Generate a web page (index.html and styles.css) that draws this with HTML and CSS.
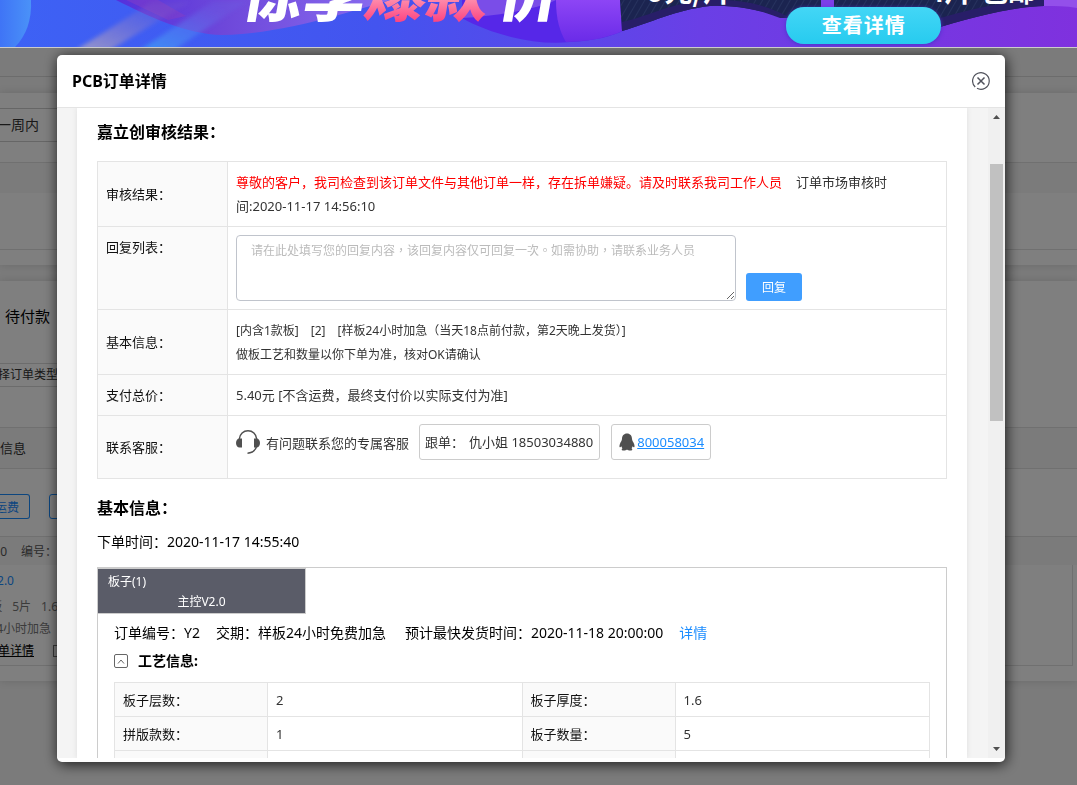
FILE: index.html
```html
<!DOCTYPE html>
<html lang="zh-CN">
<head>
<meta charset="utf-8">
<title>PCB订单详情</title>
<link rel="stylesheet" href="styles.css">
</head>
<body>
<header class="banner">
  <svg class="banner-art" viewBox="0 0 1077 47" preserveAspectRatio="xMidYMin slice" aria-hidden="true">
    <defs>
      <linearGradient id="base" x1="0" x2="1" y1="0" y2="0"><stop offset="0" stop-color="#3d62f5"/><stop offset=".35" stop-color="#4354ef"/><stop offset=".65" stop-color="#6a3fe6"/><stop offset="1" stop-color="#7f31de"/></linearGradient>
      <linearGradient id="orb" x1="0" x2="1" y1="0" y2="0"><stop offset="0" stop-color="#5430dc"/><stop offset=".4" stop-color="#6e48da"/><stop offset="1" stop-color="#8a6df0"/></linearGradient>
      <linearGradient id="ball" x1="0" x2="0" y1="0" y2="1"><stop offset="0" stop-color="#8d45f5"/><stop offset="1" stop-color="#6a2be8"/></linearGradient>
      <linearGradient id="edge" x1="0" x2="1" y1="0" y2="0"><stop offset="0" stop-color="#3f74f6"/><stop offset="1" stop-color="#4a92f8"/></linearGradient>
      <linearGradient id="hot" x1="0" x2="0" y1="0" y2="1"><stop offset=".6" stop-color="#ff8fae"/><stop offset=".9" stop-color="#fb3a7b"/></linearGradient>
      <linearGradient id="warm" x1="1" x2="0" y1="0" y2="1"><stop offset=".2" stop-color="#8a6fc4" stop-opacity=".2"/><stop offset="1" stop-color="#b1a8c0"/></linearGradient>
      <linearGradient id="cool" x1="1" x2="0" y1="0" y2="1"><stop offset=".2" stop-color="#6a7cf0" stop-opacity=".2"/><stop offset="1" stop-color="#3c9cf4"/></linearGradient>
      <pattern id="hatch" width="6" height="8" patternUnits="userSpaceOnUse" patternTransform="rotate(30)"><path d="M0 0V8" stroke="#31406c" stroke-width="1"/></pattern>
      <filter id="soft" x="-20%" y="-20%" width="140%" height="140%"><feGaussianBlur stdDeviation="2"/></filter>
    </defs>
    <rect width="1077" height="47" fill="url(#base)"/>
    <path d="M0 0H31C32 20 26 36 15 47H0Z" fill="url(#edge)"/>
    <path d="M116 0C150 17 185 34 222 35C275 34 330 18 390 0Z" fill="url(#orb)"/>
    <path d="M126 0H158L186 16L168 20Z" fill="#8a3fc4" opacity=".45"/>
    <path d="M76 50L152 2H190L110 50Z" fill="url(#warm)" opacity=".8" filter="url(#soft)"/>
    <path d="M140 50L212 2H246L174 50Z" fill="url(#cool)" opacity=".8" filter="url(#soft)"/>
    <path d="M462 18C490 34 535 46 570 42C595 41 612 36 625 30V0H462Z" fill="#5627e8"/>
    <path d="M470 0H556C540 8 500 16 462 18Z" fill="#7a4de8"/>
    <path d="M556 0C556 20 560 32 566 42C592 41 610 37 622 31L620 0Z" fill="url(#ball)"/>
    <path d="M620 0H821V18L780 17C755 8 730 5 710 6C675 10 650 23 622 31Z" fill="#1b2450"/>
    <path d="M620 0H821V18L780 17C755 8 730 5 710 6C675 10 650 23 622 31Z" fill="url(#hatch)"/>
    <path d="M622 31V22C650 16 672 2 710 0C745 -1 770 6 790 18H780C755 8 730 5 710 6C675 10 650 23 622 31Z" fill="#281e68"/>
    <path d="M834 0H1044V6C1010 7 970 18 930 30H834Z" fill="#1b2450"/>
    <path d="M834 0H1044V6C1010 7 970 18 930 30H834Z" fill="url(#hatch)"/>
    <path d="M930 30V21C975 8 1010 0 1044 0V6C1010 7 970 18 930 30Z" fill="#281e68"/>
    <path d="M821 0H834V12H821Z" fill="#7c3ee8"/>
    <path d="M1044 0H1077V8C1066 6 1054 6 1044 6Z" fill="#9350ea"/>
    <g class="slogan">
      <text transform="translate(239 16) skewX(-10)" fill="#fff">惊享</text>
      <text transform="translate(362 16) skewX(-10)" fill="url(#hot)">爆款</text>
      <text transform="translate(496 16) skewX(-10)" fill="#fff">价</text>
    </g>
    <g class="offer" fill="#fff">
      <text x="648" y="2">9元/片</text>
      <text x="928" y="2">4片</text>
      <text x="980" y="2">包邮</text>
    </g>
  </svg>
  <a class="banner-btn" href="#">查看详情</a>
</header>

<main class="page">
  <nav class="page-nav"></nav>
  <section class="panel filters">
    <div class="filter-box">近一周内</div>
    <div class="band band-short"></div>
    <div class="filter-body"></div>
  </section>
  <section class="panel orders">
    <div class="order-tab">待付款</div>
    <div class="type-select">选择订单类型</div>
    <div class="band band-title">信息</div>
    <div class="ship-row"><button class="ghost ghost-first" type="button">运费</button><button class="ghost" type="button">合并</button></div>
    <div class="band band-order"><span class="clip-num">00</span><span>编号：</span></div>
    <div class="order-row">
      <div class="order-info">
        <a class="order-name" href="#">V2.0</a>
        <p class="order-spec"><span>板</span><span>5片</span><span>1.6</span></p>
        <p class="order-speed">24小时加急</p>
        <p class="order-links"><a href="#">订单详情</a><span class="mini-box"></span></p>
      </div>
    </div>
  </section>
</main>

<div class="mask">
  <section class="dialog" role="dialog" aria-labelledby="dialog-title">
    <header class="dialog-head">
      <h1 id="dialog-title">PCB订单详情</h1>
      <button class="close" type="button" aria-label="关闭">
        <svg viewBox="0 0 18 18" width="18" height="18" fill="none" stroke="#50525c"><path d="M3.200 15A8.300 8.300 0 1 1 5 16.300" stroke-width="1.200"/><path d="M5.500 5.500L12.500 12.500M12.500 5.500L5.500 12.500" stroke-width="1.500"/></svg>
      </button>
    </header>
    <div class="dialog-body">
      <div class="card">
        <h2>嘉立创审核结果：</h2>
        <table class="grid review">
          <tr class="tall"><th scope="row">审核结果：</th><td><p class="result"><span class="alert">尊敬的客户，我司检查到该订单文件与其他订单一样，存在拆单嫌疑。请及时联系我司工作人员</span>订单市场审核时间:2020-11-17 14:56:10</p></td></tr>
          <tr class="reply"><th scope="row"><label for="reply">回复列表：</label></th><td><div class="reply-line"><textarea id="reply" lang="zh-TW" placeholder="请在此处填写您的回复内容，该回复内容仅可回复一次。如需协助，请联系业务人员"></textarea><button class="primary" type="button">回复</button></div></td></tr>
          <tr class="tall"><th scope="row">基本信息：</th><td class="small"><p class="tags"><span>[内含1款板]</span><span>[2]</span><span>[样板24小时加急（当天18点前付款，第2天晚上发货）]</span></p><p>做板工艺和数量以你下单为准，核对OK请确认</p></td></tr>
          <tr class="price"><th scope="row">支付总价：</th><td>5.40元 [不含运费，最终支付价以实际支付为准]</td></tr>
          <tr class="contact"><th scope="row">联系客服：</th><td><div class="contact-line">
            <svg class="headset" viewBox="0 0 24 24" width="24" height="24" aria-hidden="true"><path d="M3.300 9C3.800 4 7.400 .8 12 .8S20.200 4 20.700 9" fill="none" stroke="#505050" stroke-width="1.500"/><path d="M20.700 16C19.500 20.500 16 23 11.500 23.200" fill="none" stroke="#505050" stroke-width="1.500"/><path d="M6 8.500V17.500H3.500C1.500 17.500 0 15.500 0 13S1.500 8.500 3.500 8.500ZM18 8.500V17.500H20.500C22.500 17.500 24 15.500 24 13S22.500 8.500 20.500 8.500Z" fill="#505050"/></svg>
            <span class="contact-text">有问题联系您的专属客服</span>
            <span class="chip"><span>跟单：</span><span>仇小姐 18503034880</span></span>
            <span class="chip chip-qq"><svg viewBox="0 0 16 18" width="16" height="18" aria-hidden="true"><path d="M8 .5C4.800 .5 3 2.800 3 5.800C3 7.500 1.800 8.800 1 10.800C.3 12.500 .3 14.300 .9 14.300C1.400 14.300 2 13.500 2.300 13.200C2.500 14 2.900 14.700 3.500 15.200C2.500 15.600 2.200 17.300 4 17.500C5.500 17.700 7.200 17.300 8 16.500C8.800 17.300 10.500 17.700 12 17.500C13.800 17.300 13.500 15.600 12.500 15.200C13.100 14.700 13.500 14 13.700 13.200C14 13.500 14.600 14.300 15.100 14.300C15.700 14.300 15.700 12.500 15 10.800C14.200 8.800 13 7.500 13 5.800C13 2.800 11.200 .5 8 .5Z" fill="#505050"/></svg><a href="#">800058034</a></span>
          </div></td></tr>
        </table>

        <h2 class="second">基本信息：</h2>
        <p class="ordered">下单时间：2020-11-17 14:55:40</p>

        <div class="board">
          <button class="board-tab" type="button"><span class="board-no">板子(1)</span><span class="board-name">主控V2.0</span></button>
          <p class="board-meta"><span>订单编号：Y2</span><span>交期：样板24小时免费加急</span><span class="eta">预计最快发货时间：2020-11-18 20:00:00</span><a href="#">详情</a></p>
          <div class="craft-head">
            <button class="toggle" type="button" aria-label="收起"><svg viewBox="0 0 8 5" width="8" height="5" fill="none" stroke="#666"><path d="M1 4.500L4 1L7 4.500"/></svg></button>
            <h3>工艺信息:</h3>
          </div>
          <table class="grid craft">
            <tr><th scope="row">板子层数：</th><td>2</td><th scope="row">板子厚度：</th><td>1.6</td></tr>
            <tr><th scope="row">拼版款数：</th><td>1</td><th scope="row">板子数量：</th><td>5</td></tr>
            <tr><th></th><td></td><th></th><td></td></tr>
          </table>
        </div>
      </div>
      <div class="scrollbar" aria-hidden="true">
        <svg viewBox="0 0 7 4" width="7" height="4"><path d="M0 4L3.500 0L7 4Z" fill="#505050"/></svg>
        <span class="track"><span class="thumb"></span></span>
        <svg viewBox="0 0 7 4" width="7" height="4"><path d="M0 0L3.500 4L7 0Z" fill="#505050"/></svg>
      </div>
    </div>
  </section>
</div>
</body>
</html>
```

FILE: styles.css
```css
* { box-sizing: border-box; }
body {
  margin: 0;
  height: 100vh;
  overflow: hidden;
  display: flex;
  flex-direction: column;
  background: #f6f6f6;
  color: #000;
  font-family: "Noto Sans", "Noto Sans CJK SC", sans-serif;
  font-size: 13px;
  line-height: 24px;
}
p, h1, h2, h3 { margin: 0; }
button { font-family: inherit; padding: 0; cursor: pointer; }
a { color: #1a8cff; text-decoration: none; }

/* banner */
.banner {
  position: relative;
  z-index: 2;
  flex: none;
  height: 48px;
  overflow: hidden;
  border-bottom: 1px solid #ccc;
}
.banner-art { display: block; width: 100%; height: 47px; }
.slogan { font-family: "Noto Sans CJK SC", sans-serif; font-size: 62px; font-weight: 900; }
.offer { font-family: "Noto Sans CJK SC", sans-serif; font-size: 28px; font-weight: 700; }
.banner-btn {
  position: absolute;
  left: 73%;
  top: 7px;
  width: 155px;
  height: 37px;
  border-radius: 18px;
  background: linear-gradient(#43d6f6, #27cbef);
  box-shadow: 0 1px 4px #4a35c8;
  color: #fff;
  font-size: 20px;
  font-weight: 700;
  letter-spacing: 1px;
  line-height: 38px;
  text-align: center;
}

/* page underneath */
.page { flex: 1; min-height: 0; overflow: hidden; color: #333; }
.page-nav { height: 29px; border-bottom: 1px solid #d8d8d8; }
.panel { margin-top: 16px; background: #fff; box-shadow: 0 0 8px #d4d4d4; }
.filters { height: 172px; padding-top: 15px; }
.filter-box {
  display: flex;
  justify-content: flex-end;
  align-items: center;
  width: 99px;
  height: 34px;
  padding-right: 60px;
  border: solid #ccc;
  border-width: 1px 0;
  font-size: 14px;
  white-space: nowrap;
}
.band { background: #f6f6f6; border-top: 1px solid #e0e0e0; }
.band-short { height: 31px; margin-top: 20px; }
.filter-body { height: 57px; border-bottom: 1px solid #e0e0e0; }
.orders { padding-top: 23px; height: 400px; }
.order-tab { padding-left: 5px; font-size: 15px; color: #000; }
.type-select {
  display: flex;
  justify-content: flex-end;
  align-items: center;
  width: 150px;
  height: 24px;
  margin-top: 35px;
  padding-right: 92px;
  border: solid #d8d8d8;
  border-width: 1px 0;
  font-size: 12px;
  white-space: nowrap;
}
.band-title { height: 42px; margin-top: 40px; line-height: 40px; border-bottom: 1px solid #e0e0e0; }
.ship-row { display: flex; gap: 19px; padding-top: 25px; height: 67px; }
.ghost { width: 60px; height: 25px; border: 1px solid #1a8cff; border-radius: 3px; background: #fff; color: #1a8cff; font-size: 12px; }
.ghost-first { display: flex; justify-content: flex-end; align-items: center; width: 30px; padding-right: 10px; border-left: 0; border-radius: 0 3px 3px 0; white-space: nowrap; }
.band-order { display: flex; gap: 14px; height: 29px; line-height: 29px; font-size: 12px; color: #555; }
.clip-num { width: 7px; display: flex; justify-content: flex-end; }
.order-row { height: 101px; margin-right: 4px; border: solid #e0e0e0; border-width: 0 1px 1px 0; overflow: hidden; }
.order-info { display: flex; flex-direction: column; width: 58px; padding-top: 4px; font-size: 12px; color: #777; white-space: nowrap; }
.order-name { width: 14px; display: flex; justify-content: flex-end; }
.order-spec { display: flex; gap: 10px; width: 58px; justify-content: flex-end; margin-top: 3px; line-height: 22px; }
.order-speed { display: flex; justify-content: flex-end; width: 51px; line-height: 22px; }
.order-links { display: flex; align-items: center; justify-content: flex-end; gap: 19px; width: 65px; line-height: 22px; }
.order-links a { color: #000; text-decoration: underline; }
.mini-box { width: 12px; height: 12px; border: 1px solid #777; flex: none; }

/* dialog */
.mask {
  position: fixed;
  inset: 48px 0 0;
  display: flex;
  padding: 7px 72px 23px 57px;
  background: rgba(0, 0, 0, .5);
}
.dialog {
  flex: 1;
  min-width: 0;
  display: flex;
  flex-direction: column;
  padding-bottom: 4px;
  border-radius: 5px;
  background: #fff;
  box-shadow: 1px 2px 14px rgba(0, 0, 0, .8);
  overflow: hidden;
}
.dialog-head {
  flex: none;
  display: flex;
  align-items: center;
  justify-content: space-between;
  height: 53px;
  padding: 0 15px;
  border-bottom: 1px solid #e4e4e4;
}
.dialog-head h1 { font-size: 16px; font-weight: 700; }
.close { display: flex; border: 0; background: none; }
.dialog-body { flex: 1; min-height: 0; display: flex; gap: 21px; padding-left: 20px; background: #f4f4f4; overflow: hidden; }
.card { flex: 1; min-width: 0; padding: 12px 20px; background: #fff; box-shadow: 0 0 5px #ddd; }
.card h2 { font-size: 16px; font-weight: 700; }
.card .second { margin-top: 17px; }

.scrollbar { flex: none; display: flex; flex-direction: column; align-items: center; width: 17px; padding: 7px 0; background: #f0f0f0; }
.track { flex: 1; display: flex; flex-direction: column; padding-top: 45px; }
.thumb { width: 13px; height: 44%; background: #c1c1c1; }

.grid { width: 100%; border-collapse: collapse; table-layout: fixed; }
.grid th, .grid td { padding: 0 8px; border: 1px solid #e4e4e4; text-align: left; font-weight: 400; }
.grid th { background: #fafafa; color: #111; }
.grid td { color: #333; }
.review { margin-top: 17px; }
.review th { width: 130px; }
.tall { height: 65px; }
.reply { height: 83px; }
.price { height: 41px; }
.contact { height: 63px; }
.result { max-width: 660px; }
.alert { margin-right: 14px; color: #f00; }
.grid .small { padding-top: 2px; font-size: 12px; }
.tags { display: flex; gap: 12px; }
.reply th { vertical-align: top; padding-top: 8px; }
.reply-line { display: flex; align-items: flex-end; gap: 10px; }
textarea {
  width: 500px;
  height: 66px;
  padding: 5px 14px;
  border: 1px solid #c0c4cc;
  border-radius: 4px;
  font: 12px/18px "Noto Sans CJK TC", sans-serif;
}
textarea::placeholder { color: #bbb; }
.primary { width: 56px; height: 28px; border: 0; border-radius: 3px; background: #409eff; color: #fff; font-size: 12px; }
.contact-line { display: flex; align-items: center; padding-bottom: 10px; }
.contact-text { margin: 2px 10px 0 6px; }
.chip { display: flex; align-items: center; gap: 5px; height: 36px; padding: 0 6px 0 5px; border: 1px solid #ccc; border-radius: 3px; }
.chip-qq { gap: 2px; margin-left: 11px; padding: 0 6px 0 7px; }
.chip a { text-decoration: underline; }

.ordered { margin-top: 10px; font-size: 14px; }
.board { margin-top: 13px; height: 260px; border: 1px solid #ccc; }
.board-tab {
  display: flex;
  flex-direction: column;
  width: 208px;
  height: 46px;
  padding: 3px 10px;
  border: solid #ccc;
  border-width: 1px 1px 1px 0;
  background: #5a5c68;
  color: #fff;
  font-size: 12px;
  line-height: 20px;
}
.board-no { align-self: flex-start; }
.board-name { align-self: center; }
.board-meta { display: flex; gap: 16px; margin: 7px 16px 0; font-size: 14px; white-space: nowrap; }
.eta { margin-left: 3px; }
.craft-head { display: flex; align-items: center; gap: 10px; margin: 4px 16px 0; }
.craft-head h3 { font-size: 14px; font-weight: 700; }
.toggle { display: flex; align-items: center; justify-content: center; width: 14px; height: 14px; border: 1px solid #666; border-radius: 2px; background: #fff; }
.craft { width: calc(100% - 32px); margin: 9px 16px 0; }
.craft tr { height: 34px; }
.craft th { width: 153px; }
```
